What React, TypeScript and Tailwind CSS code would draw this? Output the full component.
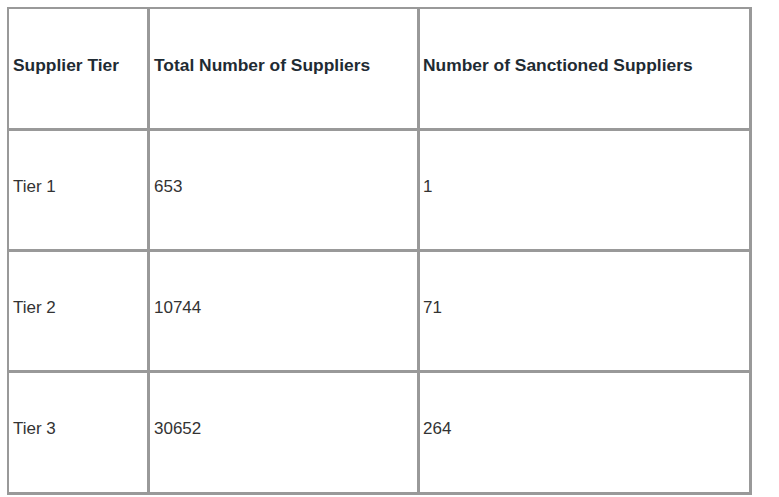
import React from 'react';

const rows = [
  ['Tier 1', '653', '1'],
  ['Tier 2', '10744', '71'],
  ['Tier 3', '30652', '264'],
];

const heights = ['h-[121px]', 'h-[121px]', 'h-[122px]'];
const pads = ['pl-[4px]', 'pl-[4px]', 'pl-[3px]'];

export default function App() {
  return (
    <div className="min-h-screen bg-white pt-[7px] pl-[7px] font-['Liberation_Sans',Arial,sans-serif]">
      <div className="grid w-[745px] grid-cols-[141px_270px_332px] border-l-2 border-t-2 border-[#999]">
        {['Supplier Tier', 'Total Number of Suppliers', 'Number of Sanctioned Suppliers'].map((h, i) => (
          <div
            key={h}
            className={`flex h-[122px] items-center border-b-[3px] border-r-[3px] border-[#999] pb-[7px] text-[17.4px] font-bold text-[#1f2b33] ${pads[i]}`}
          >
            {h}
          </div>
        ))}
        {rows.map((r, ri) =>
          r.map((c, ci) => (
            <div
              key={`${ri}-${ci}`}
              className={`flex ${heights[ri]} items-center border-b-[3px] border-r-[3px] border-[#999] pb-[7px] text-[17px] text-[#333] ${pads[ci]}`}
            >
              {c}
            </div>
          ))
        )}
      </div>
    </div>
  );
}
